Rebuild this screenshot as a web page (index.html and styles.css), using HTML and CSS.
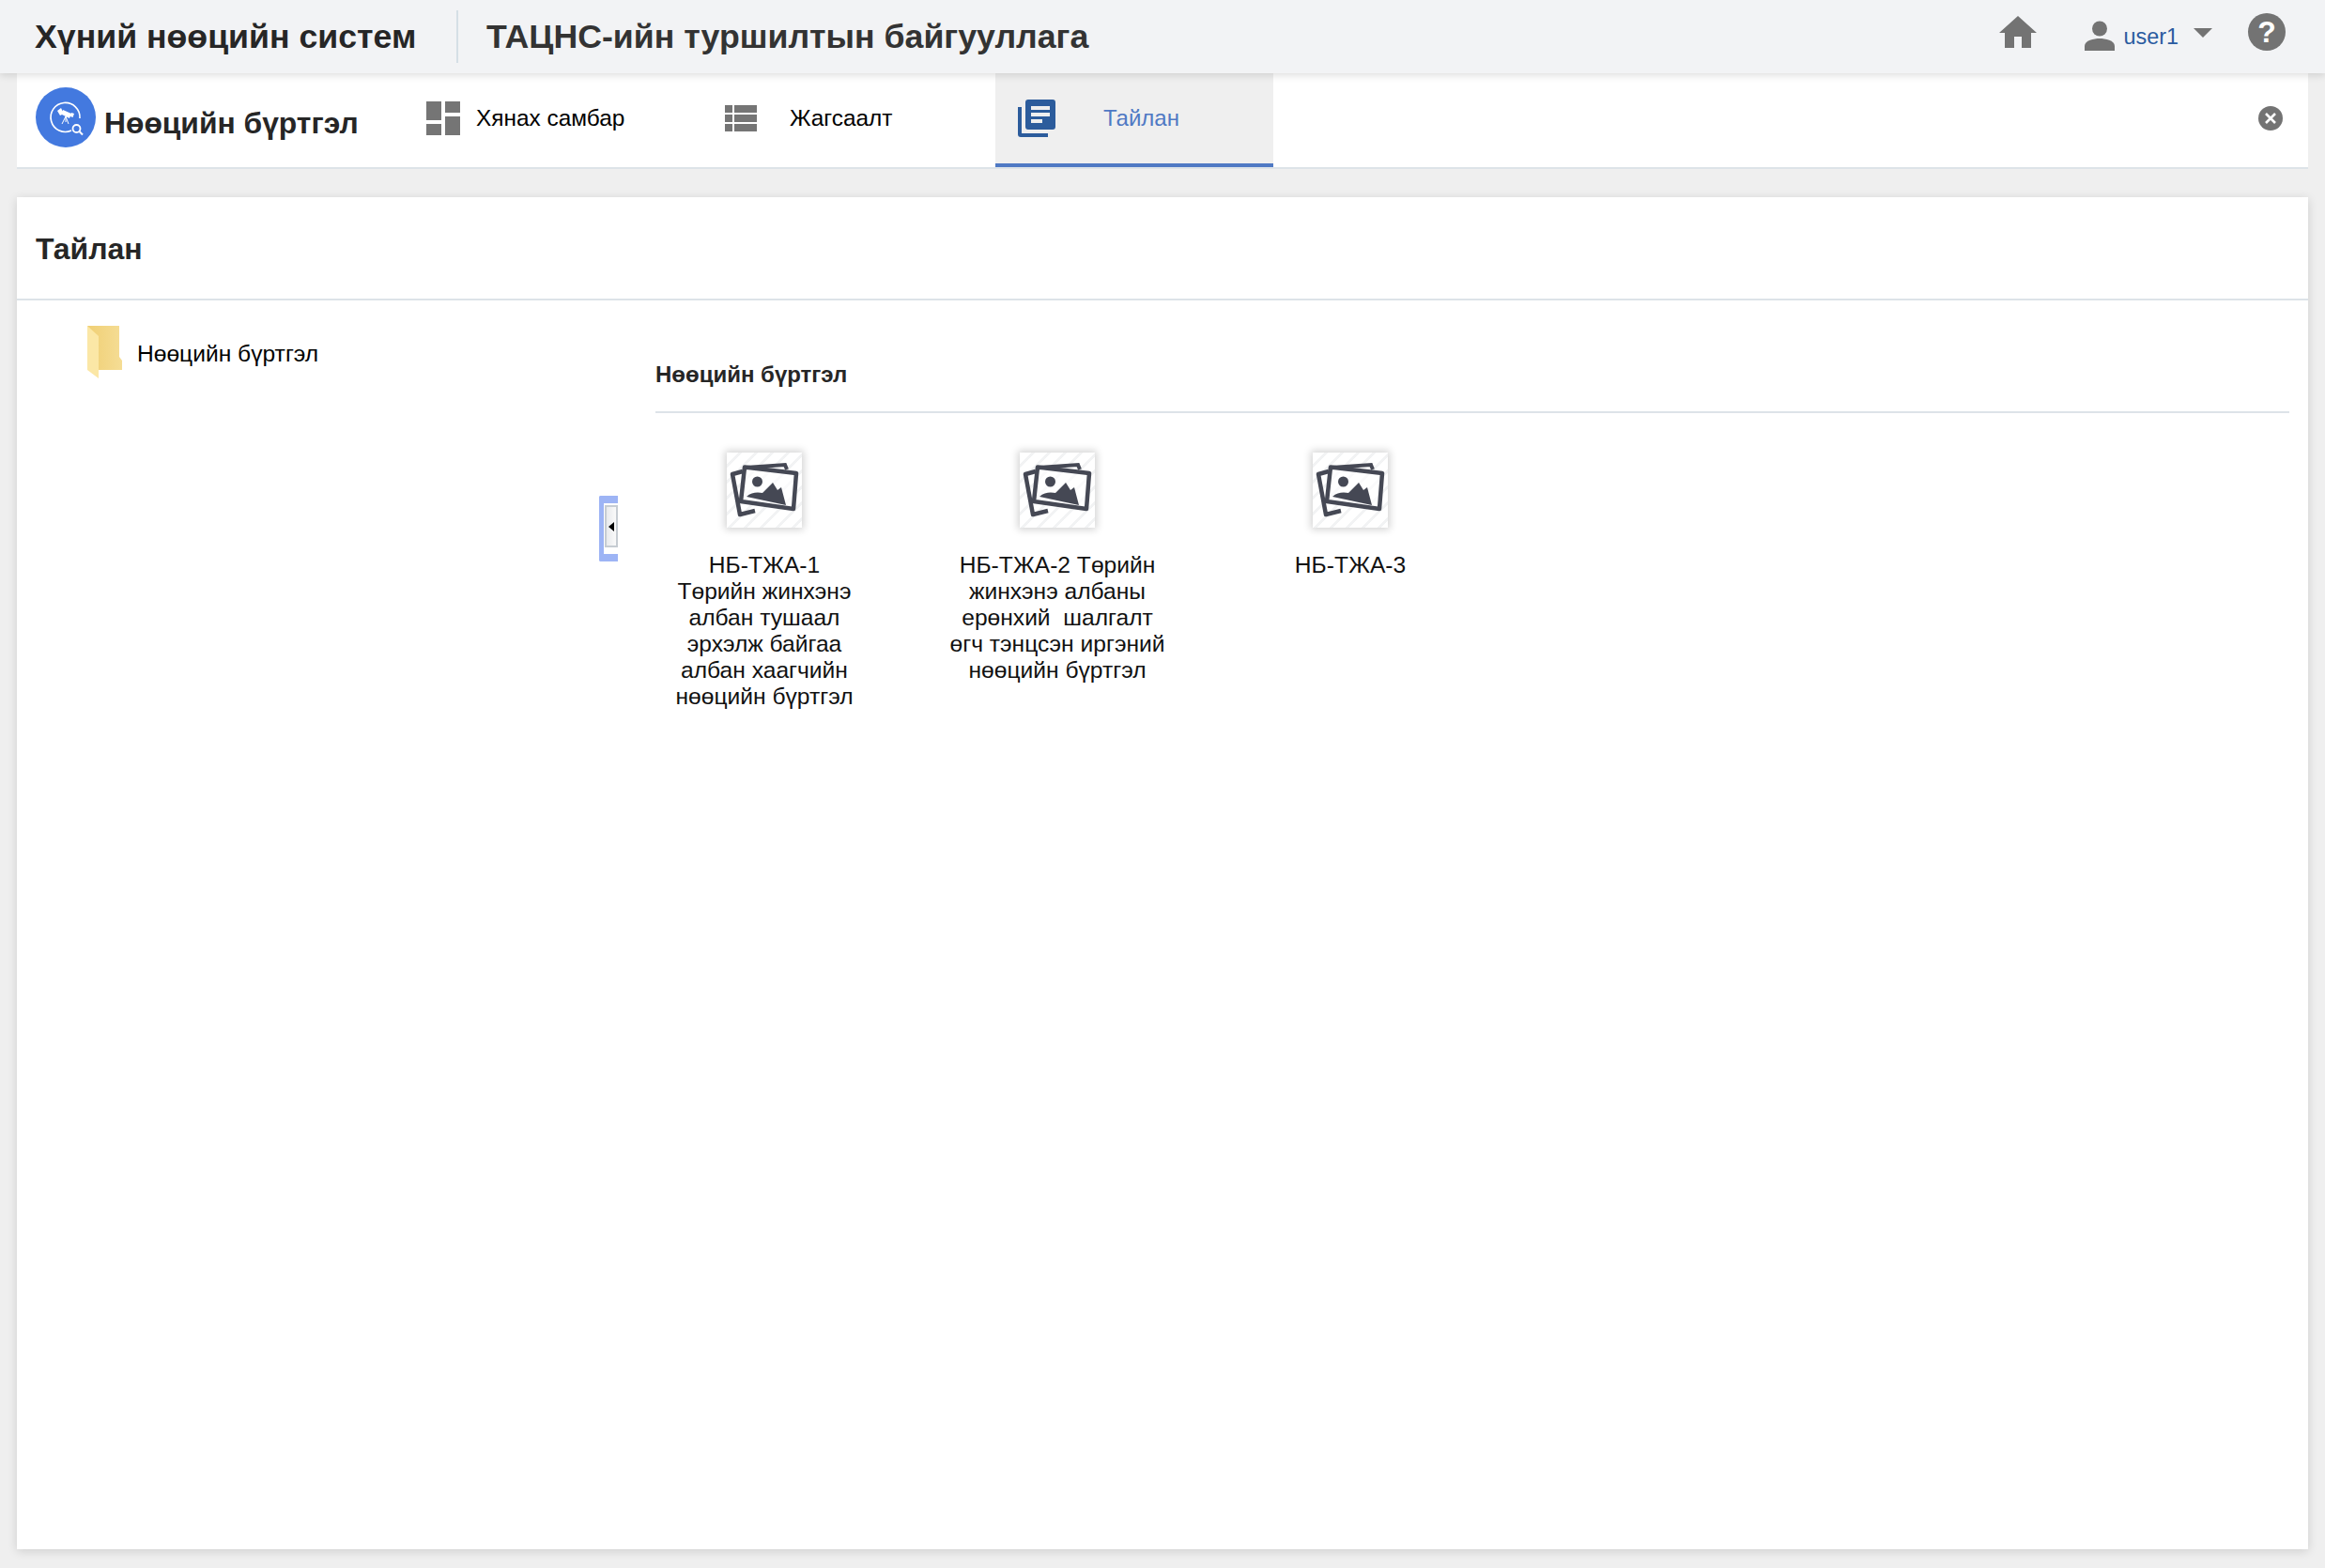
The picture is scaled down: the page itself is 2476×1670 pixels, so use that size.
FILE: index.html
```html
<!DOCTYPE html>
<html lang="mn">
<head>
<meta charset="UTF-8">
<meta name="viewport" content="width=device-width, initial-scale=1.0">
<title>Тайлан</title>
<link rel="stylesheet" href="styles.css">
</head>
<body>

<header class="topbar">
    <div class="brand">Хүний нөөцийн систем</div>
    <div class="org">ТАЦНС-ийн туршилтын байгууллага</div>
    <div class="top-actions">
        <svg class="icon-home" viewBox="0 0 40 34"><path d="M20 0 L40 18 H34 V34 H24 V22 H16 V34 H6 V18 H0 Z"/></svg>
        <div class="user">
            <svg class="icon-user" viewBox="0 0 32 32"><circle cx="16" cy="8.5" r="8"/><path d="M0 32 V27 C0 21 10 19 16 19 C22 19 32 21 32 27 V32 Z"/></svg>
            <span class="user-name">user1</span>
            <span class="caret"></span>
        </div>
        <div class="help">?</div>
    </div>
</header>

<nav class="modulebar">
    <div class="module">
        <svg class="module-logo" viewBox="0 0 64 64">
            <circle cx="32" cy="32" r="32" fill="#4379df"/>
            <path d="M38 46 A15.5 15.5 0 1 1 47 33" fill="none" stroke="#fff" stroke-width="1.6"/>
            <path d="M23 25 L27 22 L30 28 L26 30 Z M29 24 L38 28 L36 33 L28 29 Z M38 27 L41 28 L39.500 32 L37 31 Z" fill="#fff"/>
            <path d="M32 31 L28 39 M32 31 L35 39 M32 31 V37" fill="none" stroke="#fff" stroke-width="1"/>
            <circle cx="43.500" cy="44" r="4" fill="none" stroke="#fff" stroke-width="1.800"/>
            <path d="M46.500 47 L50 50.500" stroke="#fff" stroke-width="2"/>
        </svg>
        <span class="module-name">Нөөцийн бүртгэл</span>
    </div>
    <a class="tab tab-dashboard">
        <svg class="tab-icon-dash" viewBox="0 0 36 36"><path d="M0 0 H16 V20 H0 Z M20 0 H36 V12 H20 Z M20 16 H36 V36 H20 Z M0 24 H16 V36 H0 Z"/></svg>
        <span>Хянах самбар</span>
    </a>
    <a class="tab tab-list">
        <svg class="tab-icon-list" viewBox="0 0 34 28"><path d="M0 0 H8 V8 H0 Z M10 0 H34 V8 H10 Z M0 10 H8 V18 H0 Z M10 10 H34 V18 H10 Z M0 20 H8 V28 H0 Z M10 20 H34 V28 H10 Z"/></svg>
        <span>Жагсаалт</span>
    </a>
    <a class="tab tab-report">
        <svg class="tab-icon-report" viewBox="0 0 40 40">
            <path d="M0 8 H4 V36 H32 V40 H3 Q0 40 0 37 Z"/>
            <path fill-rule="evenodd" d="M11 0 H37 Q40 0 40 3 V29 Q40 32 37 32 H11 Q8 32 8 29 V3 Q8 0 11 0 Z M14 7 V11 H34 V7 Z M14 14 V18 H34 V14 Z M14 21 V25 H26 V21 Z"/>
        </svg>
        <span>Тайлан</span>
    </a>
    <div class="close-btn">
        <svg viewBox="0 0 26 26"><circle cx="13" cy="13" r="13"/><path d="M8 8 L18 18 M18 8 L8 18" stroke="#fff" stroke-width="2.600"/></svg>
    </div>
</nav>

<main class="panel">
    <h2 class="panel-title">Тайлан</h2>
    <div class="panel-body">
        <aside class="tree">
            <div class="tree-item">
                <svg class="folder" viewBox="0 0 37 56">
                    <defs>
                        <linearGradient id="folderBack" x1="0" x2="1" y1="0" y2="0"><stop offset="0" stop-color="#f0cf74"/><stop offset="1" stop-color="#f5dd95"/></linearGradient>
                    </defs>
                    <path d="M0 0 H34 V33 L37 37 V47 H12 V38 Z" fill="url(#folderBack)"/>
                    <path d="M0 0 L12 11 V56 L0 47 Z" fill="#fbe7a6"/>
                </svg>
                <span>Нөөцийн бүртгэл</span>
            </div>
        </aside>
        <div class="splitter">
            <div class="splitter-grip"><span class="splitter-arrow"></span></div>
        </div>
        <section class="content">
            <h3 class="content-title">Нөөцийн бүртгэл</h3>
            <div class="files">
                <div class="file">
                    <div class="thumb">
                        <svg viewBox="0 0 80 80"><use href="#photos"/></svg>
                    </div>
                    <div class="file-name">НБ-ТЖА-1<br>Төрийн жинхэнэ<br>албан тушаал<br>эрхэлж байгаа<br>албан хаагчийн<br>нөөцийн бүртгэл</div>
                </div>
                <div class="file">
                    <div class="thumb">
                        <svg viewBox="0 0 80 80"><use href="#photos"/></svg>
                    </div>
                    <div class="file-name">НБ-ТЖА-2 Төрийн<br>жинхэнэ албаны<br>ерөнхий &nbsp;шалгалт<br>өгч тэнцсэн иргэний<br>нөөцийн бүртгэл</div>
                </div>
                <div class="file">
                    <div class="thumb">
                        <svg viewBox="0 0 80 80"><use href="#photos"/></svg>
                    </div>
                    <div class="file-name">НБ-ТЖА-3</div>
                </div>
            </div>
        </section>
    </div>
</main>

<svg class="sprite" width="0" height="0">
    <symbol id="photos" viewBox="0 0 80 80">
        <path d="M17 20 L6 23 L14 66 L30 62" fill="none" stroke="#454854" stroke-width="4.500" stroke-linejoin="round"/>
        <path d="M20 16 L62 13 L64 18" fill="none" stroke="#454854" stroke-width="4"/>
        <path d="M19 15.500 L74 22 L71 60 L15 52 Z" fill="#fff" fill-opacity="0.6" stroke="#454854" stroke-width="4.500" stroke-linejoin="round"/>
        <circle cx="32.500" cy="31" r="5.500" fill="#454854"/>
        <path d="M21 47 C26 42 33 42 38 43 L49 32 L54 40 L58 37 L63 56 Z" fill="#454854"/>
    </symbol>
</svg>

</body>
</html>
```

FILE: styles.css
```css
* {
    box-sizing: border-box;
}
html, body {
    height: 100%;
}
body {
    margin: 0;
    display: flex;
    flex-direction: column;
    background-color: #efefef;
    font-family: "Liberation Sans", Arial, sans-serif;
    color: #000;
}
.sprite {
    display: none;
}

/* top bar */
.topbar {
    flex: none;
    height: 78px;
    display: flex;
    align-items: center;
    padding: 0 42px 0 37px;
    background-color: #f2f3f5;
    box-shadow: 0 2px 8px rgba(0, 0, 0, 0.14);
    position: relative;
    z-index: 2;
}
.brand {
    width: 451px;
    height: 56px;
    display: flex;
    align-items: center;
    font-size: 35.700px;
    font-weight: bold;
    color: #262626;
    border-right: 2px solid #d5dfe6;
}
.org {
    margin-left: 30px;
    font-size: 35.700px;
    font-weight: bold;
    color: #333;
}
.top-actions {
    margin-left: auto;
    display: flex;
    align-items: center;
}
.top-actions svg {
    fill: #737373;
    display: block;
}
.icon-home {
    width: 40px;
    height: 34px;
    margin-top: -11px;
}
.user {
    display: flex;
    align-items: center;
    margin-left: 51px;
    margin-top: -8px;
}
.icon-user {
    width: 32px;
    height: 32px;
    margin-top: 6px;
}
.user-name {
    margin-left: 9px;
    font-size: 23.400px;
    color: #2a5ba0;
    margin-top: 8px;
}
.caret {
    margin-left: 16px;
    border-left: 10px solid transparent;
    border-right: 10px solid transparent;
    border-top: 10px solid #737373;
}
.help {
    width: 40px;
    height: 40px;
    margin-left: 38px;
    margin-top: -10px;
    border-radius: 50%;
    background-color: #737373;
    color: #fff;
    font-size: 32px;
    font-weight: bold;
    line-height: 40px;
    text-align: center;
}

/* module tabs */
.modulebar {
    flex: none;
    height: 102px;
    margin: 0 18px;
    display: flex;
    background-color: #fff;
    border-bottom: 2px solid #dde3e8;
}
.module {
    width: 436px;
    padding-left: 20px;
    display: flex;
    align-items: center;
}
.module-logo {
    width: 64px;
    height: 64px;
    margin-bottom: 6px;
}
.module-name {
    margin-left: 9px;
    margin-top: 6px;
    font-size: 31.800px;
    font-weight: bold;
    color: #262626;
}
.tab {
    height: 100px;
    padding-bottom: 5px;
    display: flex;
    align-items: center;
    font-size: 24.400px;
    color: #000;
}
.tab svg {
    fill: #757575;
    display: block;
}
.tab-dashboard {
    width: 318px;
}
.tab-icon-dash {
    width: 36px;
    height: 36px;
    margin-right: 17px;
}
.tab-list {
    width: 288px;
}
.tab-icon-list {
    width: 34px;
    height: 28px;
    margin-right: 35px;
}
.tab-report {
    width: 296px;
    padding-left: 24px;
    padding-bottom: 0;
    background-color: #efefef;
    border-bottom: 4px solid #4f79c4;
    color: #4f79c4;
    font-size: 24px;
}
.tab-report svg.tab-icon-report {
    width: 40px;
    height: 40px;
    margin-right: 51px;
    fill: #2c5c9c;
}
.close-btn {
    margin-left: auto;
    margin-right: 27px;
    margin-bottom: 4px;
    align-self: center;
    width: 26px;
    height: 26px;
}
.close-btn svg {
    display: block;
    fill: #737373;
}

/* report panel */
.panel {
    flex: none;
    height: 1440px;
    margin: 30px 18px 0;
    background-color: #fff;
    box-shadow: 0 2px 10px rgba(0, 0, 0, 0.14);
    display: flex;
    flex-direction: column;
}
.panel-title {
    flex: none;
    height: 110px;
    margin: 0;
    padding-left: 20px;
    line-height: 110px;
    font-size: 32px;
    font-weight: bold;
    color: #262626;
    border-bottom: 2px solid #dde3e8;
}
.panel-body {
    flex: 1;
    display: flex;
}
.tree {
    width: 620px;
    flex: none;
    padding: 27px 0 0 75px;
}
.tree-item {
    display: flex;
    align-items: flex-start;
    font-size: 24.600px;
}
.tree-item span {
    margin-left: 16px;
    margin-top: 16px;
}
.folder {
    width: 37px;
    height: 56px;
}
.splitter {
    flex: none;
    width: 20px;
    position: relative;
}
.splitter-grip {
    position: absolute;
    left: 0;
    top: 208px;
    width: 20px;
    height: 70px;
    border: solid #9db4f5;
    border-width: 8px 0 8px 5px;
    border-radius: 2px 0 0 2px;
    background-color: #fff;
    padding: 2px 0 0 1px;
}
.splitter-arrow {
    display: block;
    width: 14px;
    height: 45px;
    background: linear-gradient(to right, #e8eaec, #fafafa);
    border: 2px solid #c6ccd2;
    position: relative;
}
.splitter-arrow::after {
    content: "";
    position: absolute;
    left: 2px;
    top: 16px;
    border-top: 5px solid transparent;
    border-bottom: 5px solid transparent;
    border-right: 6px solid #000;
}
.content {
    flex: 1;
    padding: 0 20px 0 40px;
}
.content-title {
    margin: 0;
    height: 120px;
    padding-top: 62px;
    font-size: 24px;
    line-height: 34px;
    font-weight: bold;
    color: #262626;
    border-bottom: 2px solid #dde3e8;
}
.files {
    display: flex;
    padding-top: 42px;
}
.file {
    width: 312px;
    margin-left: -40px;
    margin-right: 40px;
    display: flex;
    flex-direction: column;
    align-items: center;
}
.thumb {
    width: 80px;
    height: 80px;
    background: repeating-linear-gradient(135deg, #fff 0, #fff 9px, #f2f3f4 9px, #f2f3f4 12px);
    box-shadow: 0 0 8px 2px rgba(0, 0, 0, 0.18);
}
.thumb svg {
    display: block;
    width: 80px;
    height: 80px;
}
.file-name {
    margin-top: 26px;
    font-size: 24.600px;
    line-height: 28.100px;
    text-align: center;
    color: #111;
    white-space: nowrap;
}
```
